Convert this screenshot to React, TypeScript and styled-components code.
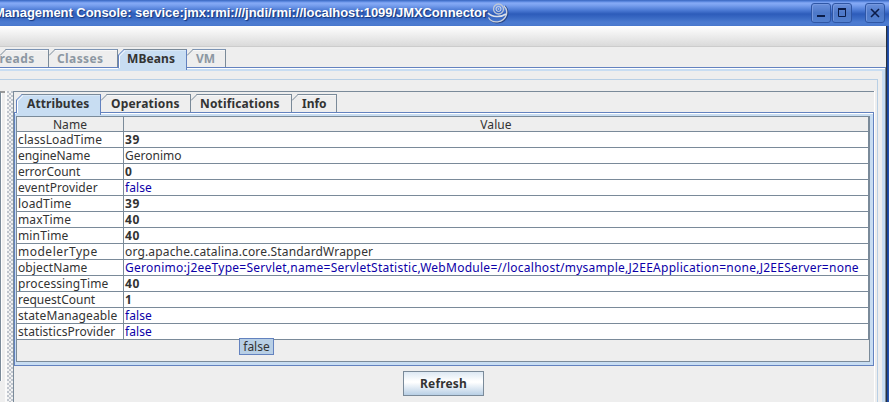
import React from 'react';
import styled, { createGlobalStyle } from 'styled-components';

const LINE = '#7a8a99';
const BLUE = '#6382bf';

const GlobalStyle = createGlobalStyle`
  * { box-sizing: border-box; }
  body { margin: 0; overflow: hidden; background: #eee; }
`;

const Window = styled.div`
  width: 889px;
  height: 402px;
  display: flex;
  flex-direction: column;
  overflow: hidden;
  background: #eee;
  color: #333;
  font: 12px/15px 'Noto Sans', sans-serif;
`;

const TitleBar = styled.header`
  flex: none;
  height: 26px;
  display: flex;
  align-items: flex-start;
  padding: 3px 4px 0 0;
  background: linear-gradient(#3a66bc 0, #4c7bd6 1px, #86aaf6 3px, #7ba2f0 5px, #4e7cd6 10px, #2d5cba 14px, #3a6ac4 18px, #4b7ad0 22px, #4c7bd0 25px, #4674ca 26px);
`;

const Title = styled.h1`
  width: 487px;
  margin: 0;
  display: flex;
  justify-content: flex-end;
  white-space: nowrap;
  color: #fff;
  font: bold 13px/20px 'Liberation Sans', sans-serif;
  letter-spacing: -0.06px;
  text-shadow: 1px 1px 1px #143478;
`;

const TitleLogo = styled.svg`
  flex: none;
  width: 22px;
  height: 22px;
  margin-right: auto;
`;

const WindowButton = styled.span<{ $gap?: number }>`
  width: 20px;
  height: 20px;
  margin-left: ${(p) => p.$gap ?? 1}px;
  border: 1px solid #2f56a4;
  border-radius: 3px;
  background: linear-gradient(#6a90dc, #4d78c8 50%, #5380cf);
  box-shadow: inset 1px 1px 0 #7698de;
  svg { display: block; }
`;

const Below = styled.div`
  flex: 1;
  min-height: 0;
  display: flex;
`;

const Frame = styled.div`
  width: 3px;
  background: linear-gradient(90deg, #29323f 1px, #173f94 1px, #2958b0 3px);
`;

const Content = styled.div`
  width: 886px;
  display: flex;
  flex-direction: column;
`;

const MenuBar = styled.div`
  flex: none;
  height: 21px;
  border-bottom: 1px solid #ccc;
  background: linear-gradient(#fff, #dadada);
`;

const TabStrip = styled.nav<{ $indent?: number }>`
  flex: none;
  display: flex;
  height: 20px;
  padding: 2px 0 0 ${(p) => p.$indent ?? 0}px;
`;

const TabBox = styled.div<{ $width: number; $selected?: boolean; $disabled?: boolean }>`
  position: relative;
  width: ${(p) => p.$width}px;
  height: ${(p) => (p.$selected ? 21 : 18)}px;
  z-index: ${(p) => (p.$selected ? 1 : 0)};
  border-top: 1px solid ${(p) => (p.$disabled ? '#7c94b4' : LINE)};
  border-right: 1px solid ${(p) => (p.$selected ? BLUE : LINE)};
  background: ${(p) => (p.$selected ? '#c8ddf2' : '#eee')};
  box-shadow: inset 0 1px 0 ${(p) => (p.$selected ? '#d8e8f8' : '#f8f8f8')};
  color: ${(p) => (p.$disabled ? '#8c97a2' : '#333')};
  white-space: nowrap;
`;

const TabLabel = styled.span<{ $spacing: number; $start: number }>`
  display: block;
  margin-left: ${(p) => p.$start}px;
  font: bold 12px/17px 'Noto Sans', sans-serif;
  letter-spacing: ${(p) => p.$spacing}px;
`;

const Corner = styled.svg`
  position: absolute;
  left: 0;
  top: -1px;
`;

const OuterPane = styled.div`
  flex: 1;
  min-height: 0;
  display: flex;
  padding: 11px 7px 0 0;
  border-top: 1px solid ${BLUE};
  border-right: 1px solid ${LINE};
  box-shadow: inset 0 1px 0 #fff, inset 0 3px 0 #c8ddf2, inset -3px 0 0 #c8ddf2;
`;

const Split = styled.div`
  flex: 1;
  display: flex;
  border-top: 1px solid #b8cfe5;
  border-right: 1px solid #b8cfe5;
  padding: 11px 3px 0 0;
`;

const TreeEdge = styled.div`
  width: 5px;
  height: 290px;
  border-top: 2px solid #9a9a9a;
  border-left: 1px solid ${LINE};
  background: linear-gradient(90deg, #fff 1px, #eee 1px);
`;

const Divider = styled.div`
  width: 8px;
  border-left: 2px solid #fafafa;
  background:
    radial-gradient(circle at 1px 1px, #a4adba 0.6px, transparent 0.9px) 0 0 / 4px 4px,
    radial-gradient(circle at 3px 3px, #a4adba 0.6px, transparent 0.9px) 0 0 / 4px 4px,
    #f2f2f2;
`;

const Detail = styled.section`
  position: relative;
  flex: 1;
  display: flex;
  flex-direction: column;
  border-top: 1px solid ${LINE};
  border-left: 1px solid ${LINE};
  box-shadow: 1px 0 0 #fff;
`;

const TabPage = styled.div`
  flex: none;
  height: 254px;
  padding: 3px 3px 3px 1px;
  border: 1px solid ${BLUE};
  background: linear-gradient(#fff 0, #fff 1px, #c8ddf2 1px);
`;

const ScrollPane = styled.div`
  height: 246px;
  border: 1px solid ${LINE};
  background: #eee;
`;

const Table = styled.div`
  display: grid;
  grid-template-columns: 107px 1fr;
`;

const Cell = styled.div<{ $link?: boolean; $bold?: boolean; $spacing?: number; $header?: boolean }>`
  height: ${(p) => (p.$header ? 15 : 16)}px;
  padding-left: ${(p) => (p.$header ? 0 : 1)}px;
  border-right: 1px solid ${LINE};
  border-bottom: 1px solid ${LINE};
  background: ${(p) => (p.$header ? '#eee' : '#fff')};
  color: ${(p) => (p.$link ? '#0c00a8' : '#333')};
  font-size: 12px;
  font-weight: ${(p) => (p.$bold ? 700 : 400)};
  line-height: ${(p) => (p.$header ? 15 : 16)}px;
  letter-spacing: ${(p) => p.$spacing ?? (p.$bold ? 0.6 : 0.1)}px;
  text-align: ${(p) => (p.$header ? 'center' : 'left')};
  white-space: nowrap;
`;

const DragHint = styled.div`
  position: absolute;
  left: 225px;
  top: 246px;
  width: 35px;
  height: 17px;
  border: 1px solid ${BLUE};
  background: #b8cfe5;
  line-height: 15px;
  text-align: center;
`;

const Actions = styled.div`
  display: flex;
  padding: 5px 0 0 389px;
`;

const Button = styled.button`
  width: 81px;
  height: 25px;
  padding: 0;
  border: 1px solid ${LINE};
  border-radius: 0;
  background: linear-gradient(#dde8f3, #fff 40%, #fff 45%, #b8cfe5);
  color: #333;
  font: bold 12px/20px 'Noto Sans', sans-serif;
  letter-spacing: 0.15px;
`;

type TabProps = {
  label: string;
  width: number;
  start: number;
  selected?: boolean;
  disabled?: boolean;
  spacing?: number;
};

function Tab({ label, width, start, selected, disabled, spacing = 0 }: TabProps) {
  return (
    <TabBox $width={width} $selected={selected} $disabled={disabled}>
      <Corner width="7" height={selected ? 19 : 7} aria-hidden="true">
        <path d="M0 0H6L0 6Z" fill="#eee" />
        <path d="M0 6.5L6.5 0" stroke={selected ? BLUE : LINE} fill="none" />
        {selected && <path d="M.5 6V19" stroke={BLUE} />}
        {selected && <path d="M1.5 19V7L7 1.5" stroke="#fff" fill="none" />}
      </Corner>
      <TabLabel $spacing={spacing} $start={start}>{label}</TabLabel>
    </TabBox>
  );
}

type Row = { name: string; value: string; bold?: boolean; link?: boolean; ns?: number; vs?: number };

const rows: Row[] = [
  { name: 'classLoadTime', value: '39', bold: true, ns: 0.12 },
  { name: 'engineName', value: 'Geronimo', ns: -0.05, vs: 0 },
  { name: 'errorCount', value: '0', bold: true, ns: -0.05 },
  { name: 'eventProvider', value: 'false', link: true },
  { name: 'loadTime', value: '39', bold: true, ns: 0.15 },
  { name: 'maxTime', value: '40', bold: true, ns: 0.15 },
  { name: 'minTime', value: '40', bold: true, ns: 0.15 },
  { name: 'modelerType', value: 'org.apache.catalina.core.StandardWrapper', ns: 0.5, vs: 0.16 },
  {
    name: 'objectName',
    value: 'Geronimo:j2eeType=Servlet,name=ServletStatistic,WebModule=//localhost/mysample,J2EEApplication=none,J2EEServer=none',
    link: true,
    vs: 0.26,
  },
  { name: 'processingTime', value: '40', bold: true, ns: 0.1 },
  { name: 'requestCount', value: '1', bold: true, ns: 0 },
  { name: 'stateManageable', value: 'false', link: true },
  { name: 'statisticsProvider', value: 'false', link: true, ns: 0.06 },
];

export default function App() {
  return (
    <Window>
      <GlobalStyle />
      <TitleBar>
        <Title>Management Console: service:jmx:rmi:///jndi/rmi://localhost:1099/JMXConnector</Title>
        <TitleLogo viewBox="0 0 22 22" fill="none" aria-hidden="true">
          <path d="M2 15C6 22 18 21 20.5 12C21 9 20 5 18 3" stroke="#2a4787" strokeWidth="1.5" />
          <path d="M1.500 14.500C5 21 16.500 20.500 19.500 11.500C20.200 8.500 19 5 17 3" stroke="#ccd3de" strokeWidth="1.3" />
          <path d="M1 10C5 14.500 14 14.500 19 11" stroke="#dce1e9" strokeWidth="1.700" />
          <circle cx="11.500" cy="6" r="5" stroke="#bdc6d5" strokeWidth="1.300" />
          <circle cx="11.500" cy="6" r="2.500" stroke="#d5dae3" />
          <circle cx="11.500" cy="6" r=".7" fill="#d5dae3" />
        </TitleLogo>
        <WindowButton>
          <svg width="18" height="18" aria-hidden="true"><path d="M5 12h8" stroke="#0b1c48" strokeWidth="2" /></svg>
        </WindowButton>
        <WindowButton>
          <svg width="18" height="18" fill="none" aria-hidden="true">
            <path d="M5.500 5V12.500H12.500V5" stroke="#0b1c48" />
            <path d="M5 5H13" stroke="#0b1c48" strokeWidth="2" />
          </svg>
        </WindowButton>
        <WindowButton $gap={13}>
          <svg width="18" height="18" aria-hidden="true"><path d="M5 5L13 13M13 5L5 13" stroke="#0b1c48" strokeWidth="1.6" /></svg>
        </WindowButton>
      </TitleBar>
      <Below>
        <Content>
          <MenuBar />
          <TabStrip>
            <Tab label="Threads" width={49} start={-16} disabled spacing={0.4} />
            <Tab label="Classes" width={69} start={8} disabled spacing={0.4} />
            <Tab label="MBeans" width={69} start={9} selected spacing={0.1} />
            <Tab label="VM" width={39} start={9} disabled />
          </TabStrip>
          <OuterPane>
            <Split>
              <TreeEdge />
              <Divider />
              <Detail>
                <TabStrip $indent={2}>
                  <Tab label="Attributes" width={85} start={11} selected spacing={0.1} />
                  <Tab label="Operations" width={90} start={10} spacing={0.2} />
                  <Tab label="Notifications" width={101} start={9} spacing={0.15} />
                  <Tab label="Info" width={45} start={10} />
                </TabStrip>
                <TabPage>
                  <ScrollPane>
                    <Table>
                      <Cell $header>Name</Cell>
                      <Cell $header>Value</Cell>
                      {rows.map((r) => (
                        <React.Fragment key={r.name}>
                          <Cell $spacing={r.ns}>{r.name}</Cell>
                          <Cell $link={r.link} $bold={r.bold} $spacing={r.vs}>{r.value}</Cell>
                        </React.Fragment>
                      ))}
                    </Table>
                  </ScrollPane>
                </TabPage>
                <Actions><Button>Refresh</Button></Actions>
                <DragHint>false</DragHint>
              </Detail>
            </Split>
          </OuterPane>
        </Content>
        <Frame />
      </Below>
    </Window>
  );
}
